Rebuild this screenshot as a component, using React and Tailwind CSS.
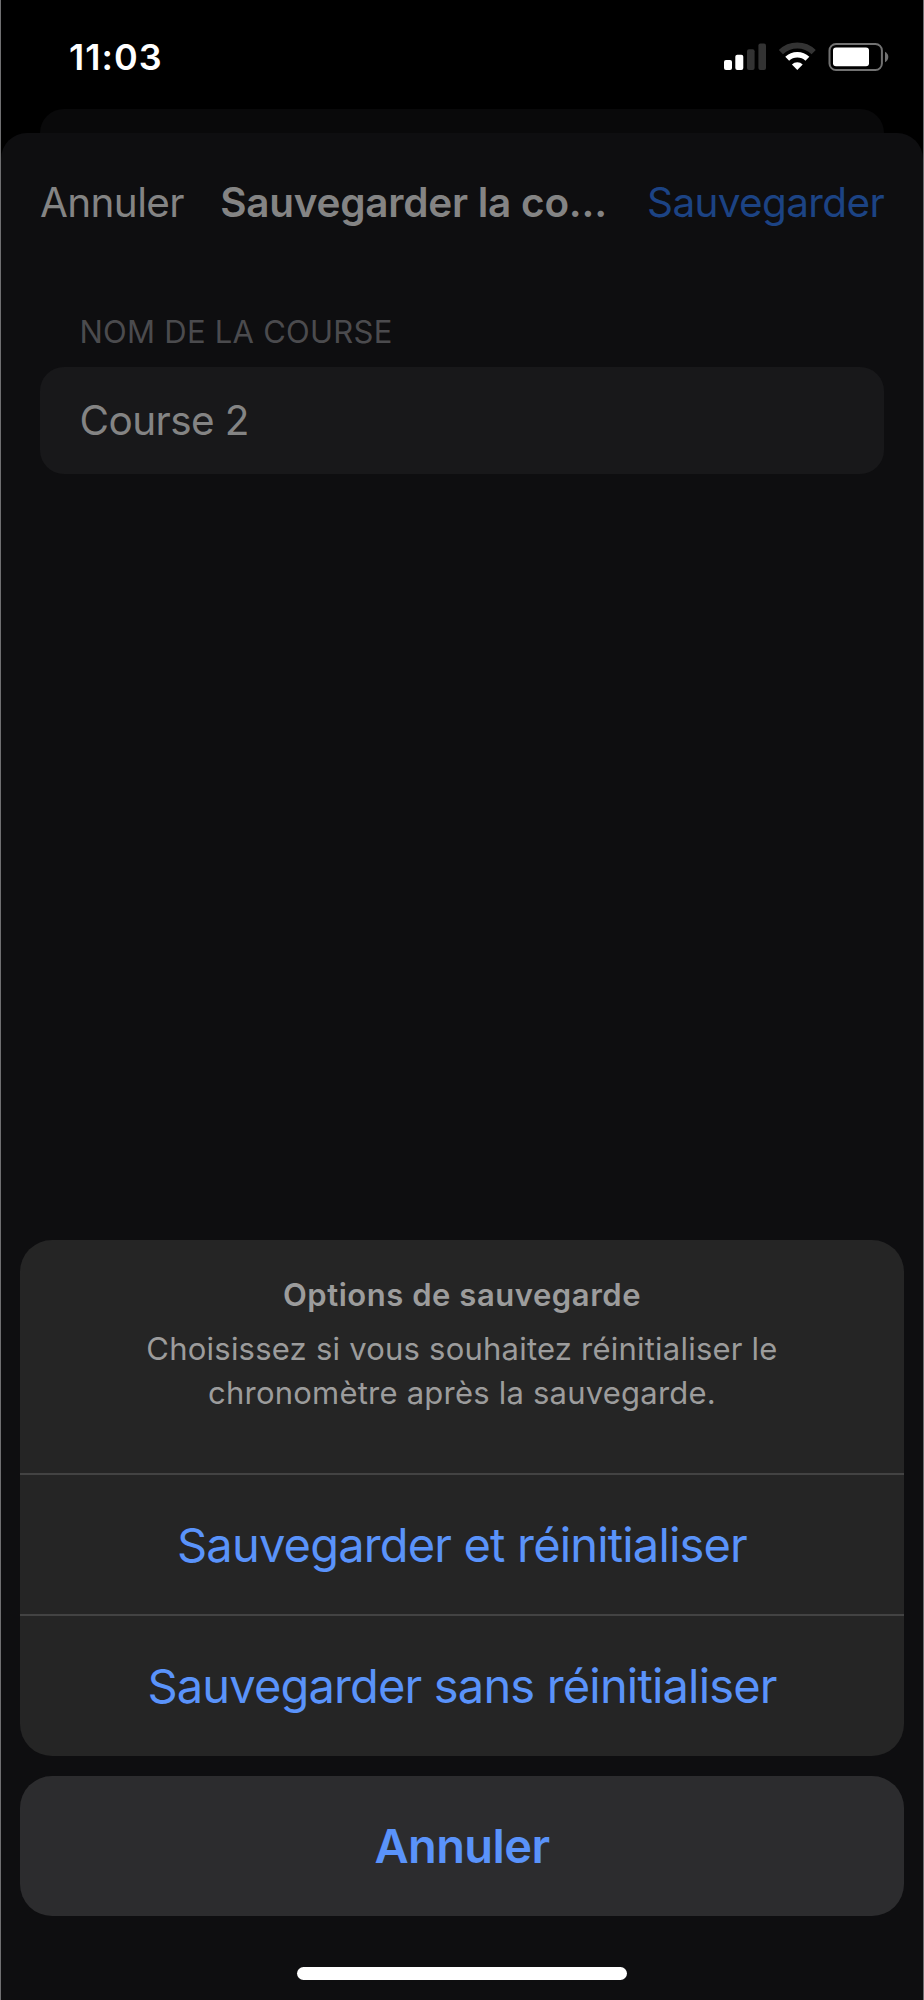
import React from 'react';

const StatusIcons = () => (
    <svg className="w-[166px] h-[30px]" viewBox="723 42 166 30" fill="none">
        {/* Signal */}
        <rect x="724" y="60" width="8" height="10" rx="2" fill="#fff" />
        <rect x="735.3" y="54.8" width="8" height="15.2" rx="2" fill="#fff" />
        <rect x="747" y="49.2" width="7.6" height="20.8" rx="2" fill="#333" />
        <rect x="758.4" y="43.6" width="7.6" height="26.4" rx="2" fill="#333" />
        {/* Wi-Fi */}
        <path d="M780.9 52.2A23.6 23.6 0 0 1 813.7 52.2" stroke="#333" strokeWidth="6" />
        <path d="M787.2 58.8A14.6 14.6 0 0 1 807.4 58.8" stroke="#fff" strokeWidth="5.6" />
        <path d="M797.3 70L791.9 64.4A7.6 7.6 0 0 1 802.7 64.4Z" fill="#fff" />
        {/* Battery */}
        <rect x="829.5" y="44" width="52.4" height="26" rx="6.5" stroke="#727272" strokeWidth="2" />
        <rect x="833" y="47.6" width="36" height="18.6" rx="3" fill="#fff" />
        <path d="M885 51.8C889.4 53.6 889.4 60.4 885 62.2Z" fill="#727272" />
    </svg>
);

const ActionButton = ({ children, className }) => (
    <button className={`flex items-center justify-center text-[47px] text-[#5a93fa] whitespace-nowrap ${className}`}>
        {children}
    </button>
);

const App = () => {
    return (
        <div className="flex flex-col w-[924px] h-[2000px] overflow-hidden bg-black border-x border-[#6f6f71] font-['Inter',sans-serif]">
            <div className="flex justify-between h-[109px] pt-[35px] pl-[68px] pr-[34px]">
                <span className="text-[36px] leading-[44px] tracking-[1px] font-semibold text-white">11:03</span>
                <div className="pt-[7px]">
                    <StatusIcons />
                </div>
            </div>

            {/* Card behind the sheet */}
            <div className="h-[24px] mx-[39px] shrink-0">
                <div className="h-[50px] rounded-t-[24px] bg-[#09090a]"></div>
            </div>

            <div className="relative flex flex-col flex-1 rounded-t-[26px] bg-[#0e0e10]">
                <div className="flex items-center justify-between h-[140px] px-[39px] text-[40.5px] tracking-[-0.65px] text-[#848484] whitespace-nowrap">
                    <button>Annuler</button>
                    <h1 className="mr-[4px] font-semibold tracking-[-0.25px]">Sauvegarder la co...</h1>
                    <button className="text-[#1c4384]">Sauvegarder</button>
                </div>

                <div className="px-[39px] pt-[39px]">
                    <label className="block pl-[39.5px] text-[31px] leading-[40px] tracking-[0.25px] text-[#4b4b4e]">NOM DE LA COURSE</label>
                    <div className="flex items-center h-[107px] mt-[15px] pt-px pl-[39.5px] rounded-[24px] bg-[#18181a] text-[40.5px] tracking-[-0.6px] text-[#848484]">
                        Course 2
                    </div>
                </div>

                <div className="flex flex-col mt-auto px-[19px]">
                    <div className="flex flex-col rounded-[32px] bg-[#252525] overflow-hidden">
                        <div className="pt-[35px] pb-[58px] text-center text-[31px] text-[#9c9c9c]">
                            <h2 className="leading-[40px] tracking-[0.55px] font-semibold">Options de sauvegarde</h2>
                            <p className="mt-[12px] leading-[44px] tracking-[0.22px]">
                                Choisissez si vous souhaitez réinitialiser le
                                <br />
                                chronomètre après la sauvegarde.
                            </p>
                        </div>
                        <ActionButton className="h-[141px] pt-px border-t-2 border-[#434343] tracking-[-0.83px]">Sauvegarder et réinitialiser</ActionButton>
                        <ActionButton className="h-[142px] border-t-2 border-[#434343] tracking-[-0.83px]">Sauvegarder sans réinitialiser</ActionButton>
                    </div>
                    <ActionButton className="h-[140px] mt-[20px] rounded-[32px] bg-[#2c2c2e] tracking-[-0.6px] font-semibold">Annuler</ActionButton>
                </div>

                <div className="w-[330px] h-[13px] mt-[51px] mb-[20px] mx-auto rounded-full bg-white"></div>
            </div>
        </div>
    );
};

export default App;
